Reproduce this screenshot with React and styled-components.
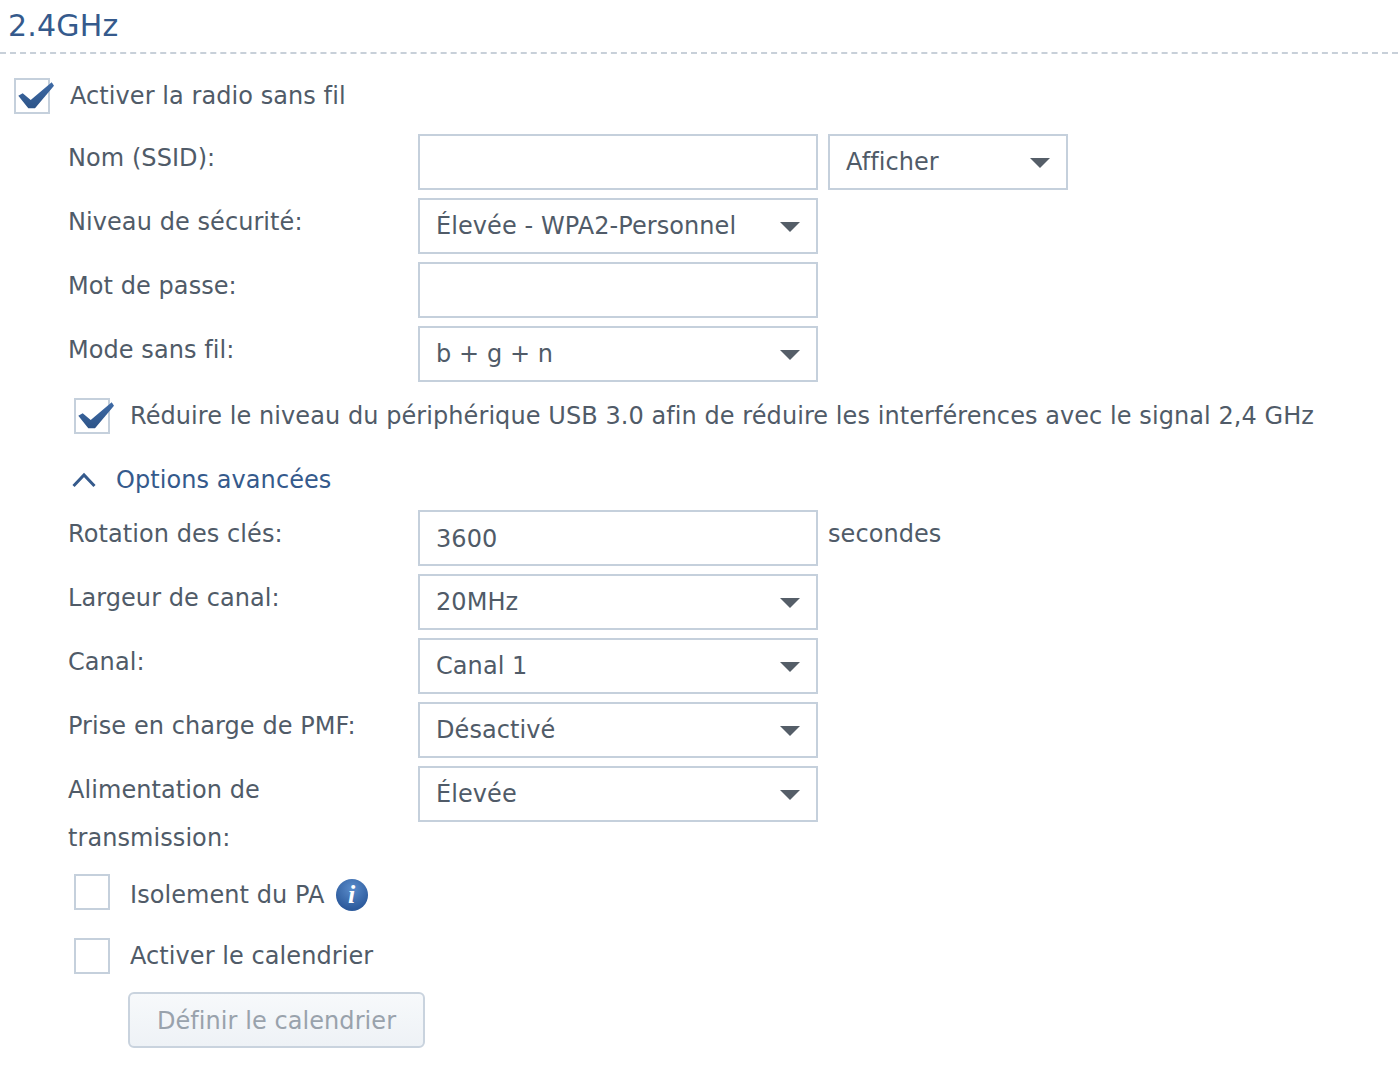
import React from "react";
import styled, { createGlobalStyle } from "styled-components";

const GlobalStyle = createGlobalStyle`
  body {
    margin: 0;
    background: #fff;
    font-family: "DejaVu Sans", Verdana, sans-serif;
    color: #505b68;
  }
`;

const Page = styled.div`
  width: 1398px;
  height: 1090px;
  overflow: hidden;
  font-size: 24px;
  letter-spacing: 0.07px;
`;

const Title = styled.h2`
  margin: 0;
  height: 54px;
  box-sizing: border-box;
  padding: 8px 0 0 8px;
  border-bottom: 2px dashed #c8d0d9;
  font-size: 30px;
  line-height: 36px;
  font-weight: 400;
  letter-spacing: 0.2px;
  color: #355a8c;
`;

const CheckRow = styled.div`
  display: flex;
  align-items: center;
  height: 36px;
  margin: ${(p) => p.$margin || "0"};
  padding-left: ${(p) => (p.$top ? "14px" : "74px")};
`;

const Box = styled.span`
  position: relative;
  flex: none;
  width: 36px;
  height: 36px;
  box-sizing: border-box;
  border: 2px solid #c5d0dc;
  margin-right: 20px;
  margin-bottom: ${(p) => p.$raise || 0}px;
`;

const Mark = styled.svg`
  position: absolute;
  left: -2px;
  top: -2px;
  width: 44px;
  height: 36px;
  overflow: visible;
`;

const Row = styled.div`
  display: flex;
  gap: 10px;
  margin-bottom: 8px;
  padding-left: 68px;
`;

const Label = styled.div`
  flex: none;
  width: 340px;
  line-height: 48px;
`;

const Field = styled.div`
  position: relative;
  flex: none;
  box-sizing: border-box;
  width: ${(p) => p.$width || 400}px;
  height: 56px;
  border: 2px solid #c5d0dc;
  padding-left: 16px;
  line-height: ${(p) => (p.$input ? 54 : 52)}px;
  white-space: nowrap;
`;

const Arrow = styled.span`
  position: absolute;
  right: 16px;
  top: 22px;
  width: 0;
  height: 0;
  border-left: 10px solid transparent;
  border-right: 10px solid transparent;
  border-top: 10px solid #555e68;
`;

const Unit = styled.div`
  line-height: 48px;
`;

const Advanced = styled.div`
  display: flex;
  align-items: center;
  gap: 20px;
  height: 36px;
  margin: 28px 0 12px;
  padding-left: 72px;
  color: #355a8c;
`;

const Info = styled.span`
  flex: none;
  width: 32px;
  height: 32px;
  margin-left: 11px;
  border-radius: 50%;
  background: radial-gradient(circle at 50% 30%, #5a8ccb, #2c5a9c 75%);
  color: #fff;
  font-family: "Liberation Serif", serif;
  font-style: italic;
  font-weight: 700;
  font-size: 26px;
  line-height: 32px;
  text-align: center;
`;

const Action = styled.button`
  display: block;
  box-sizing: border-box;
  width: 297px;
  height: 56px;
  margin: 18px 0 0 128px;
  padding: 2px 0 0;
  border: 2px solid #c9d3de;
  border-radius: 6px;
  background: linear-gradient(#f7f9fb, #eef2f6);
  color: #99a2ac;
  font: inherit;
  letter-spacing: inherit;
`;

const Check = ({ checked, top, margin, raise, children }) => (
  <CheckRow $top={top} $margin={margin}>
    <Box $raise={raise}>
      {checked && (
        <Mark viewBox="0 0 44 36">
          <defs>
            <linearGradient id="tick" x1="0" y1="0" x2="0" y2="1">
              <stop offset="0" stopColor="#3f6ba6" />
              <stop offset="1" stopColor="#2d5488" />
            </linearGradient>
          </defs>
          <path
            d="M4.3 17.7 L8.7 15.3 L16.7 22 L37.7 4.3 L40 7.7 L21 30.3 L14.3 30.3 Z"
            fill="url(#tick)"
          />
        </Mark>
      )}
    </Box>
    {children}
  </CheckRow>
);

const Select = ({ width, children }) => (
  <Field $width={width}>
    {children}
    <Arrow />
  </Field>
);

export default function App() {
  return (
    <Page>
      <GlobalStyle />
      <Title>2.4GHz</Title>
      <Check checked top margin="24px 0 20px">Activer la radio sans fil</Check>

      <Row>
        <Label>Nom (SSID):</Label>
        <Field />
        <Select width={240}>Afficher</Select>
      </Row>
      <Row>
        <Label>Niveau de sécurité:</Label>
        <Select>Élevée - WPA2-Personnel</Select>
      </Row>
      <Row>
        <Label>Mot de passe:</Label>
        <Field />
      </Row>
      <Row>
        <Label>Mode sans fil:</Label>
        <Select>b + g + n</Select>
      </Row>

      <Check checked margin="16px 0 0">
        Réduire le niveau du périphérique USB 3.0 afin de réduire les interférences avec le signal 2,4 GHz
      </Check>

      <Advanced>
        <svg width="24" height="16" viewBox="0 0 24 16" fill="none" stroke="#355a8c" strokeWidth="3">
          <path d="M1.5 14 L12 3 L22.5 14" />
        </svg>
        Options avancées
      </Advanced>

      <Row>
        <Label>Rotation des clés:</Label>
        <Field $input>3600</Field>
        <Unit>secondes</Unit>
      </Row>
      <Row>
        <Label>Largeur de canal:</Label>
        <Select>20MHz</Select>
      </Row>
      <Row>
        <Label>Canal:</Label>
        <Select>Canal 1</Select>
      </Row>
      <Row>
        <Label>Prise en charge de PMF:</Label>
        <Select>Désactivé</Select>
      </Row>
      <Row>
        <Label>
          Alimentation de
          <br />
          transmission:
        </Label>
        <Select>Élevée</Select>
      </Row>

      <Check raise={6} margin="15px 0 25px">
        Isolement du PA
        <Info>i</Info>
      </Check>
      <Check>Activer le calendrier</Check>
      <Action disabled>Définir le calendrier</Action>
    </Page>
  );
}
